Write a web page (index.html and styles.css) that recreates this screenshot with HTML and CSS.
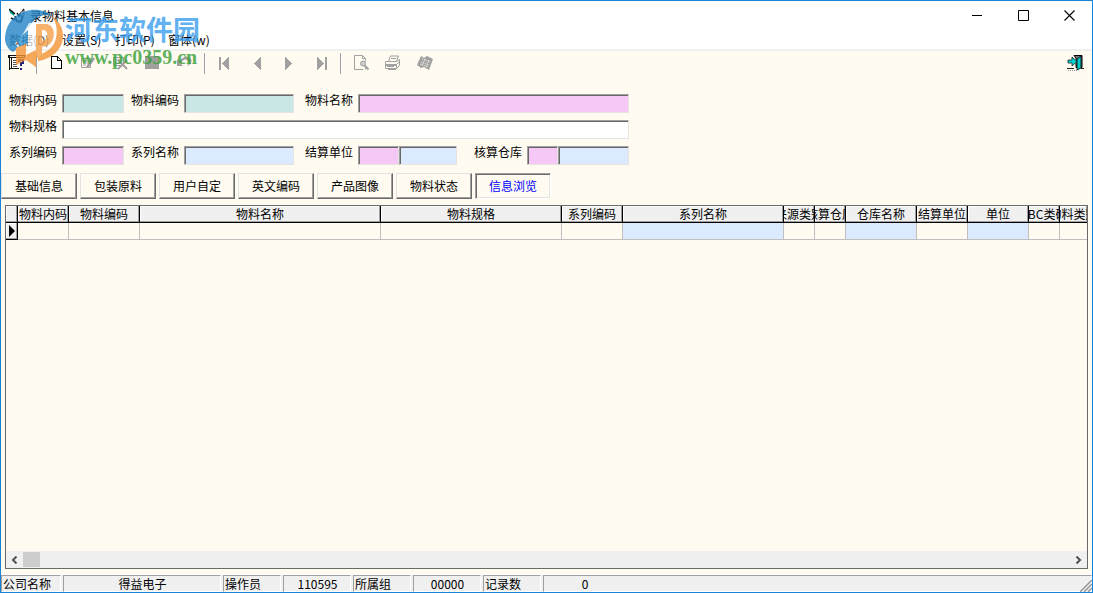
FILE: index.html
```html
<!DOCTYPE html>
<html lang="zh-CN">
<head>
<meta charset="utf-8">
<title>录物料基本信息</title>
<link rel="stylesheet" href="styles.css">
</head>
<body>
<div class="window">
  <header class="titlebar">
    <svg class="app-icon" width="18" height="16" viewBox="0 0 18 16"><path d="M0 1l5 3v4L1 5z" fill="#00a79a"/><path d="M0 1l6 5M8 5l2 3 2-3M15 1l-3 5M6 8l2 6M14 8l-2 5M2 10l4 2" stroke="#111" stroke-width="1.5" fill="none"/><path d="M9 12h5l-2 3H9z" fill="#555"/><path d="M11 5l4-3v5l-3 2z" fill="#ddd" stroke="#333" stroke-width=".8"/></svg>
    <h1 class="title">录物料基本信息</h1>
    <div class="window-buttons">
      <button class="win-btn" aria-label="最小化"><svg width="11" height="11" viewBox="0 0 11 11"><path d="M0 5.500h10" stroke="#000"/></svg></button>
      <button class="win-btn" aria-label="最大化"><svg width="11" height="11" viewBox="0 0 11 11"><path d="M.5 .5h10v10h-10z" stroke="#000" fill="none"/></svg></button>
      <button class="win-btn" aria-label="关闭"><svg width="11" height="11" viewBox="0 0 11 11"><path d="M.5 .5l10 10M10.500 .5l-10 10" stroke="#000" stroke-width="1.100"/></svg></button>
    </div>
  </header>
  <nav class="menubar">
    <button class="menu">数据(D)</button><button class="menu">设置(S)</button><button class="menu">打印(P)</button><button class="menu">窗体(w)</button>
  </nav>
  <div class="toolbar">
    <div class="group lead">
      <button class="tool" aria-label="目录"><svg width="18" height="16" viewBox="0 0 18 16" shape-rendering="crispEdges"><path d="M.5 .5h16v2h-16zM1.500 .5v14M3.500 2v12M1 13.500h10" stroke="#111" fill="none"/><path d="M5 5h4M5 7h4M5 9h4M5 11h4" stroke="#555"/><path d="M11 7V5h4v3h-2v3M13 13v2" stroke="#25257c" stroke-width="2" fill="none"/></svg></button>
    </div>
    <div class="group edit">
      <button class="tool" aria-label="新建"><svg width="16" height="16" viewBox="0 0 16 16" shape-rendering="crispEdges"><path d="M3.500 1.500h6l4 4v8h-10zM9.500 1.500v4h4" fill="#fff" stroke="#000"/></svg></button>
      <button class="tool" aria-label="编辑"><svg width="16" height="16" viewBox="0 0 16 16"><path d="M1.500 3.500h9v9h-9zM3 6h6M3 8h5M3 10h3" stroke="#a0a0a0" fill="none"/><path d="M13 2l2 2-6 8-3 1 1-3z" fill="#a0a0a0"/></svg></button>
      <button class="tool" aria-label="删除"><svg width="16" height="16" viewBox="0 0 16 16"><path d="M1.500 2.500h10v8h-10zM3 5h7M3 8h6" stroke="#a0a0a0" fill="none"/><path d="M6 5l9 9M15 5l-9 9" stroke="#a0a0a0" stroke-width="2"/></svg></button>
      <button class="tool" aria-label="保存"><svg width="16" height="16" viewBox="0 0 16 16"><path d="M1 1h14v13H1z" fill="#a0a0a0"/></svg></button>
      <button class="tool" aria-label="撤销"><svg width="16" height="16" viewBox="0 0 16 16"><path d="M1 4v7h6L4.500 8.500Q8 3 11 5q3 2 0 6 6-3 4-7-4-6-12 2z" fill="#a0a0a0"/></svg></button>
    </div>
    <div class="group move">
      <button class="tool" aria-label="首条"><svg width="16" height="16" viewBox="0 0 16 16" shape-rendering="crispEdges"><path d="M3 2h2v13H3zM13 2v13L6 8.500z" fill="#a0a0a0"/></svg></button>
      <button class="tool" aria-label="上一条"><svg width="16" height="16" viewBox="0 0 16 16" shape-rendering="crispEdges"><path d="M13 2v13L6 8.500z" fill="#a0a0a0"/></svg></button>
      <button class="tool" aria-label="下一条"><svg width="16" height="16" viewBox="0 0 16 16" shape-rendering="crispEdges"><path d="M5 2v13l7-6.500z" fill="#a0a0a0"/></svg></button>
      <button class="tool" aria-label="末条"><svg width="16" height="16" viewBox="0 0 16 16" shape-rendering="crispEdges"><path d="M13 2h2v13h-2zM5 2v13l7-6.500z" fill="#a0a0a0"/></svg></button>
    </div>
    <div class="group output">
      <button class="tool" aria-label="预览"><svg width="16" height="16" viewBox="0 0 16 16"><path d="M10 14.500H1.500V.5h8l3 3v3M9.500 .5v3h3M12.500 12v2.500" stroke="#a0a0a0" fill="none"/><circle cx="10" cy="8.500" r="2.500" fill="#ccc" stroke="#a0a0a0"/><path d="M11.500 10.500l4 4" stroke="#a0a0a0" stroke-width="2"/></svg></button>
      <button class="tool" aria-label="打印"><svg width="16" height="16" viewBox="0 0 16 16"><path d="M3.500 6l2-5h8l-2 5M6 3.500h5M.5 6.500h11l3-2v6l-3 3H.5zM.5 9.500h11v4M11.500 9.500l3-3M2 11.500h7M3 14.500h8" stroke="#a0a0a0" fill="none"/><path d="M1 9h10v2H1z" fill="#a0a0a0"/></svg></button>
      <button class="tool" aria-label="导出"><svg width="16" height="16" viewBox="0 0 16 16"><path d="M4 1l3 2 3-2 6 3-4 11-5-3-3 1-4-3z" fill="#a0a0a0"/><path d="M5 4l8 3M4 7l8 3M3 9l8 3M8 4l-3 7M12 5l-3 7" stroke="#fffbf0" stroke-dasharray="1 1"/></svg></button>
    </div>
    <button class="tool exit" aria-label="退出"><svg width="18" height="16" viewBox="0 0 18 16"><path d="M7 .5h8v12H9V3z" fill="#777" stroke="#000"/><path d="M10 4l4-3v12l-4 2z" fill="#00c8c8" stroke="#000" stroke-width=".8"/><path d="M1 5h4V2l5 4.500L5 11V8H1z" fill="#00d5d5" stroke="#222" stroke-width=".8"/><path d="M0 13.500h7M14 13.500h3" stroke="#222"/><path d="M1 15.500h9" stroke="#999" stroke-dasharray="1 1"/></svg></button>
  </div>

  <form class="form">
    <div class="row">
      <label for="f1">物料内码</label><input id="f1" class="field w-code teal">
      <label for="f2">物料编码</label><input id="f2" class="field w-name teal">
      <label class="third" for="f3">物料名称</label><input id="f3" class="field w-long pink">
    </div>
    <div class="row">
      <label for="f4">物料规格</label><input id="f4" class="field w-full">
    </div>
    <div class="row">
      <label for="f5">系列编码</label><input id="f5" class="field w-code pink">
      <label for="f6">系列名称</label><input id="f6" class="field w-name blue">
      <label class="third" for="f7">结算单位</label><input id="f7" class="field w-unit pink"><input class="field w-unit-name blue" aria-label="结算单位名称">
      <label class="fourth" for="f8">核算仓库</label><input id="f8" class="field w-store pink"><input class="field w-store-name blue" aria-label="仓库名称">
    </div>
  </form>

  <div class="tabs" role="tablist">
    <button class="tab" role="tab">基础信息</button>
    <button class="tab" role="tab">包装原料</button>
    <button class="tab" role="tab">用户自定</button>
    <button class="tab" role="tab">英文编码</button>
    <button class="tab" role="tab">产品图像</button>
    <button class="tab" role="tab">物料状态</button>
    <button class="tab active" role="tab" aria-selected="true">信息浏览</button>
  </div>

  <main class="grid">
    <div class="grid-view">
      <table class="data">
        <colgroup><col class="c12"><col class="c51"><col class="c71"><col class="c241"><col class="c181"><col class="c61"><col class="c161"><col class="c31"><col class="c31"><col class="c71"><col class="c51"><col class="c61"><col class="c31"><col></colgroup>
        <thead><tr><th></th><th><span>物料内码</span></th><th><span>物料编码</span></th><th><span>物料名称</span></th><th><span>物料规格</span></th><th><span>系列编码</span></th><th><span>系列名称</span></th><th><span>来源类别</span></th><th><span>核算仓库</span></th><th><span>仓库名称</span></th><th><span>结算单位</span></th><th><span>单位</span></th><th><span>ABC类码</span></th><th><span>物料类别</span></th></tr></thead>
        <tbody><tr><td class="marker"><svg width="6" height="12" viewBox="0 0 6 12"><path d="M0 0l6 6-6 6z"/></svg></td><td></td><td></td><td></td><td></td><td></td><td class="blue"></td><td></td><td></td><td class="blue"></td><td></td><td class="blue"></td><td></td><td></td></tr></tbody>
      </table>
    </div>
    <div class="scrollbar">
      <button class="arrow" aria-label="向左"><svg width="7" height="8" viewBox="0 0 7 8"><path d="M5.500 .5L2 4l3.500 3.500" stroke="#505050" stroke-width="2" fill="none"/></svg></button>
      <span class="thumb"></span>
      <button class="arrow" aria-label="向右"><svg width="7" height="8" viewBox="0 0 7 8"><path d="M1.500 .5L5 4 1.500 7.500" stroke="#505050" stroke-width="2" fill="none"/></svg></button>
    </div>
  </main>

  <footer class="status">
    <span class="cell s60">公司名称</span>
    <span class="cell s158 mid">得益电子</span>
    <span class="cell s58">操作员</span>
    <span class="cell s68 mid">110595</span>
    <span class="cell s58">所属组</span>
    <span class="cell s68 mid">00000</span>
    <span class="cell s58">记录数</span>
    <span class="cell rest"><span class="count">0</span></span>
    <svg class="grip" width="12" height="12" viewBox="0 0 12 12"><path d="M0 12L12 0M4 12l8-8M8 12l4-4" stroke="#999" stroke-width="1.500"/></svg>
  </footer>

  <div class="watermark">
    <svg class="mark-logo" width="60" height="64" viewBox="0 0 60 64">
      <path d="M0 34C0 18 10 6 26 4c8-1 16 1 21 6-6-2-12-1-16 2L10 38l4 4-6 4C4 44 1 40 0 34z" fill="#2384c6"/>
      <path d="M24 17h19l-4 5h-8v22l-8 4V26l-9 9z" fill="#fff" opacity=".75"/>
      <path d="M13 33l10-9v12l-9 7z" fill="#2b8fce"/>
      <path d="M46 10c8 4 12 12 12 20 0 13-11 23-25 25v-6c9-2 16-8 18-17 2-9 0-17-5-22z" fill="#f39434"/>
      <path d="M32 18h9c10 0 11 19 0 22l-4 1v-6c7-1 7-11 1-11h-1v25l-6 4V18z" fill="#f6a14a"/>
      <path d="M11 42l10-4v11l10-5v17l-10-7-10 5z" fill="#f39434"/>
    </svg>
    <div class="mark-words"><span class="mark-name">河东软件园</span><span class="mark-url">www.pc0359.cn</span></div>
  </div>
</div>
</body>
</html>
```
FILE: styles.css
```css
* { box-sizing: border-box; }
body {
  margin: 0;
  font: 12px/16px "Noto Sans CJK SC", "Noto Sans", sans-serif;
  color: #000;
}
button, input { font: inherit; color: inherit; margin: 0; padding: 0; border: 0; background: none; border-radius: 0; }
svg { display: block; }

.window {
  position: relative;
  display: flex;
  flex-direction: column;
  height: 100vh;
  border: 1px solid #1883d7;
  background: #fffbf0;
  overflow: hidden;
}

.titlebar { display: flex; align-items: center; height: 29px; padding-left: 8px; background: #fff; flex: none; }
.title { margin: 0 0 0 3px; font-size: 12px; font-weight: 400; }
.window-buttons { display: flex; margin-left: auto; }
.win-btn { display: grid; place-items: center; width: 46px; height: 28px; }

.menubar { display: flex; gap: 12px; height: 21px; padding: 1px 0 0 8px; background: #fff; border-bottom: 2px solid #f0f0f0; flex: none; }
.menu { width: 41px; text-align: left; white-space: nowrap; }
.menu:first-child { color: #555; }

.toolbar { display: flex; align-items: center; height: 24px; padding: 0 7px 0 3px; flex: none; }
.group { display: flex; }
.group + .group { border-left: 1px solid #a0a0a0; box-shadow: inset 1px 0 #fff; }
.tool { display: grid; place-items: center; width: 32px; height: 21px; }
.tool.exit { width: 18px; margin-left: auto; }
.lead { width: 32px; }
.lead .tool { width: 26px; }
.edit, .move { padding: 0 4px 0 3px; }
.output { padding-left: 4px; }

.form { display: flex; flex-direction: column; gap: 6px; padding: 18px 8px 8px; flex: none; }
.row { display: flex; align-items: flex-end; height: 20px; }
.row label { width: 53px; height: 20px; line-height: 14px; white-space: nowrap; flex: none; }
.row .field + label { margin-left: 7px; }
.row .field + .third { margin-left: 11px; }
.row .field + .fourth { margin-left: 17px; }
.field {
  height: 19px;
  background: #fff;
  border: 1px solid;
  border-color: #a0a0a0 #e3e3e3 #e3e3e3 #a0a0a0;
  box-shadow: inset 1px 1px #696969;
}
.w-code { width: 62px; }
.w-name { width: 110px; }
.w-long { width: 271px; }
.w-full { width: 567px; }
.w-unit { width: 41px; }
.w-unit-name { width: 58px; }
.w-store { width: 31px; }
.w-store-name { width: 71px; }
.teal { background: #c8e6e3; }
.pink { background: #f5c8f5; }
.blue { background: #dbeaff; }

.tabs { display: flex; gap: 3px; flex: none; }
.tab {
  width: 76px;
  height: 26px;
  border: 1px solid;
  border-color: #e3e3e3 #696969 #696969 #e3e3e3;
  box-shadow: inset -1px -1px #a0a0a0;
}
.tab.active {
  color: #00f;
  border-color: #a0a0a0 #fff #fff #a0a0a0;
  box-shadow: inset 1px 1px #696969, inset -1px -1px #e3e3e3;
}

.grid {
  display: flex;
  flex-direction: column;
  flex: 1;
  min-height: 0;
  margin: 6px 4px 5px;
  border: 1px solid #696969;
}
.grid-view { flex: 1; overflow: hidden; }
.data { width: 100%; table-layout: fixed; border-collapse: separate; border-spacing: 0; }
.data th, .data td { height: 17px; padding: 0; overflow: hidden; }
.data th {
  background: #f0f0f0;
  border-right: 1px solid #000;
  border-bottom: 1px solid #000;
  box-shadow: inset -1px -1px #a0a0a0, inset 1px 1px #fff;
  font-weight: 400;
  line-height: 16px;
}
.data th span { display: flex; justify-content: center; white-space: nowrap; height: 16px; }
.data td { border-right: 1px solid #c0c0c0; border-bottom: 1px solid #c0c0c0; }
.data th:last-child, .data td:last-child { border-right: 0; }
.data .marker { background: #f0f0f0; border-color: #000; padding-left: 3px; box-shadow: inset -1px -1px #a0a0a0, inset 1px 1px #fff; }
.c12 { width: 12px; }
.c31 { width: 31px; }
.c51 { width: 51px; }
.c61 { width: 61px; }
.c71 { width: 71px; }
.c161 { width: 161px; }
.c181 { width: 181px; }
.c241 { width: 241px; }

.scrollbar { display: flex; align-items: center; height: 17px; background: #f0f0f0; }
.arrow { display: grid; place-items: center; width: 17px; height: 17px; }
.thumb { width: 17px; height: 15px; background: #cdcdcd; margin-right: auto; }

.status { position: relative; display: flex; gap: 2px; height: 18px; background: #f0f0f0; border-top: 1px solid #fff; flex: none; }
.cell { height: 17px; padding-left: 1px; border: 1px solid; border-color: #a0a0a0 #fff #fff #a0a0a0; line-height: 15px; white-space: nowrap; }
.mid { text-align: center; }
.s58 { width: 58px; }
.s60 { width: 60px; }
.s68 { width: 68px; }
.s158 { width: 158px; }
.rest { flex: 1; }
.count { display: block; width: 80px; text-align: center; }
.grip { position: absolute; right: 0; bottom: 0; }

.watermark { position: absolute; left: 4px; top: 5px; display: flex; pointer-events: none; opacity: .8; }
.mark-words { display: flex; flex-direction: column; margin-top: 5px; }
.mark-name { font-size: 27px; line-height: 36px; font-weight: 700; color: #3ca0f0; }
.mark-url { font: 700 20px/20px "Liberation Serif", serif; color: #38a038; }
```
